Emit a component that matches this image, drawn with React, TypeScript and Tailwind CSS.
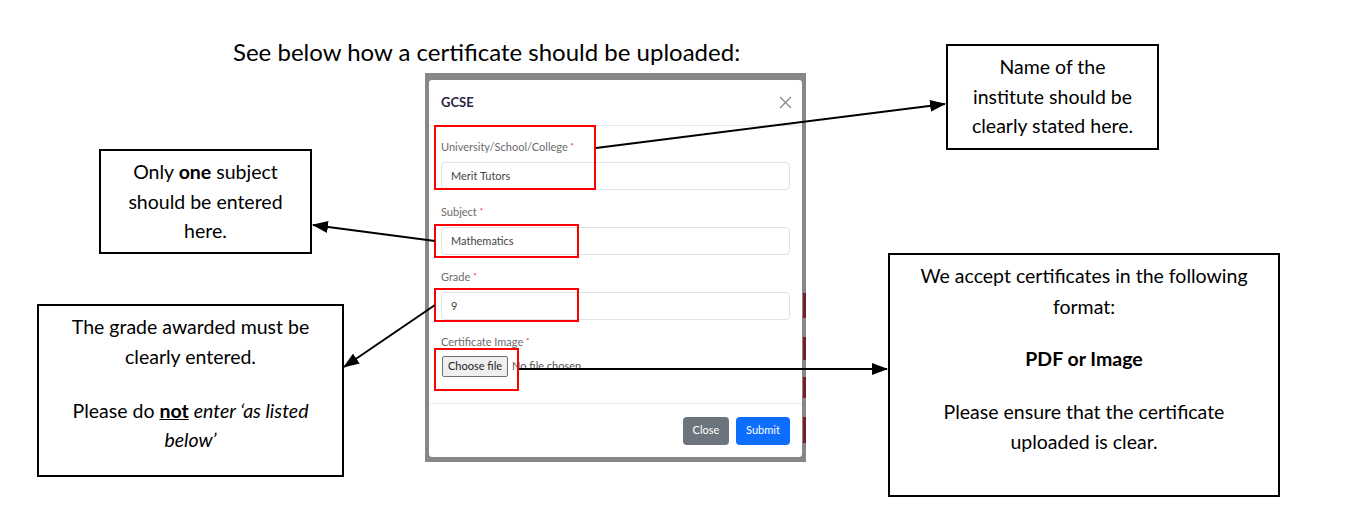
import React from 'react';

const sans = "font-['Lato',sans-serif]";

function Note({ className, children }: { className: string; children: React.ReactNode }) {
  return (
    <div
      className={`absolute border-2 border-black bg-white text-center text-black ${sans} text-[19.5px] leading-[29.5px] ${className}`}
    >
      {children}
    </div>
  );
}

function Field({ label, value }: { label: string; value: string }) {
  return (
    <div className="mb-[14px]">
      <div className="text-[11px] leading-[15px] text-[#6b6b6b] mb-2">
        {label} <span className="text-[#e0303f] text-[8px] align-top">*</span>
      </div>
      <div className="h-[28px] rounded-[4px] border border-[#dfe3e8] px-[9px] flex items-center text-[11px] text-[#444]">
        {value}
      </div>
    </div>
  );
}

function Modal() {
  return (
    <div className="absolute left-[425px] top-[73px] w-[381px] h-[389px] bg-[#878787] pt-[7px] pl-[4px] pr-[4px] pb-[5px]">
      <div className={`w-full h-full bg-white rounded-[3px] flex flex-col ${sans}`}>
        <div className="h-[46px] border-b border-[#e6e8ec] pl-3 pr-[10px] flex items-center justify-between">
          <span className="text-[13px] font-bold text-[#2b2347]">GCSE</span>
          <svg width="13" height="13" viewBox="0 0 13 13">
            <path d="M1 1 L12 12 M12 1 L1 12" stroke="#8a8a8a" strokeWidth="1.4" />
          </svg>
        </div>
        <div className="flex-1 px-3 pt-[13px]">
          <Field label="University/School/College" value="Merit Tutors" />
          <Field label="Subject" value="Mathematics" />
          <Field label="Grade" value="9" />
          <div className="text-[11px] leading-[15px] text-[#6b6b6b] mb-[7px]">
            Certificate Image <span className="text-[#e0303f] text-[8px] align-top">*</span>
          </div>
          <div className="flex items-center gap-[4px] text-[11px]">
            <div className="h-[21px] px-[5px] ml-[1px] flex items-center border border-[#707070] bg-[#efefef] rounded-[2px] text-[#222]">
              Choose file
            </div>
            <span className="text-[#555]">No file chosen</span>
          </div>
        </div>
        <div className="h-[54px] border-t border-[#e6e8ec] px-3 flex items-center justify-end gap-[7px]">
          <div className="h-[28px] w-[46px] rounded-[4px] bg-[#6c757d] text-white text-[11px] flex items-center justify-center">
            Close
          </div>
          <div className="h-[28px] w-[54px] rounded-[4px] bg-[#0d6efd] text-white text-[11px] flex items-center justify-center">
            Submit
          </div>
        </div>
      </div>
      {/* background page showing through at the right edge */}
      <div className="absolute right-0 top-[220px] w-[3px] h-[25px] bg-[#7a1d2a]" />
      <div className="absolute right-0 top-[264px] w-[3px] h-[23px] bg-[#7a1d2a]" />
      <div className="absolute right-0 top-[304px] w-[3px] h-[21px] bg-[#7a1d2a]" />
      <div className="absolute right-0 top-[344px] w-[3px] h-[26px] bg-[#7a1d2a]" />
    </div>
  );
}

function Arrows() {
  return (
    <svg className="absolute left-0 top-0" width="1351" height="529" viewBox="0 0 1351 529">
      <defs>
        <marker id="head" markerWidth="8" markerHeight="6" refX="7.5" refY="3" orient="auto" markerUnits="strokeWidth">
          <path d="M0 0 L8 3 L0 6 Z" fill="#000" />
        </marker>
      </defs>
      <g stroke="#000" strokeWidth="2" fill="none">
        <line x1="596" y1="148" x2="945" y2="104" markerEnd="url(#head)" />
        <line x1="435" y1="241" x2="313" y2="225" markerEnd="url(#head)" />
        <line x1="435" y1="305" x2="344" y2="367" markerEnd="url(#head)" />
        <line x1="519" y1="369" x2="887" y2="369" markerEnd="url(#head)" />
      </g>
    </svg>
  );
}

export default function App() {
  return (
    <div className="relative w-[1351px] h-[529px] bg-white overflow-hidden">
      <div className={`absolute left-[233px] top-[36px] text-[24px] leading-[32px] text-black ${sans}`}>
        See below how a certificate should be uploaded:
      </div>

      <Modal />

      {/* red highlight frames over the form */}
      <div className="absolute left-[434px] top-[125px] w-[162px] h-[65px] border-2 border-[#ff0000]" />
      <div className="absolute left-[434px] top-[224px] w-[145px] h-[34px] border-2 border-[#ff0000]" />
      <div className="absolute left-[434px] top-[288px] w-[145px] h-[34px] border-2 border-[#ff0000]" />
      <div className="absolute left-[434px] top-[348px] w-[85px] h-[43px] border-2 border-[#ff0000]" />

      <Arrows />

      <Note className="left-[99px] top-[149px] w-[213px] h-[105px] pt-[6px]">
        <p>
          Only <b>one</b> subject
        </p>
        <p>should be entered</p>
        <p>here.</p>
      </Note>

      <Note className="left-[37px] top-[304px] w-[307px] h-[173px] pt-[6px]">
        <p>The grade awarded must be</p>
        <p>clearly entered.</p>
        <p className="mt-[24.5px]">
          Please do <b className="underline">not</b> <i>enter ‘as listed</i>
        </p>
        <p>
          <i>below’</i>
        </p>
      </Note>

      <Note className="left-[946px] top-[44px] w-[213px] h-[106px] pt-[6px]">
        <p>Name of the</p>
        <p>institute should be</p>
        <p>clearly stated here.</p>
      </Note>

      <Note className="left-[888px] top-[253px] w-[392px] h-[244px] pt-[6px] leading-[30.5px]">
        <p>We accept certificates in the following</p>
        <p>format:</p>
        <p className="mt-[22px] font-bold">PDF or Image</p>
        <p className="mt-[22px]">Please ensure that the certificate</p>
        <p>uploaded is clear.</p>
      </Note>
    </div>
  );
}
